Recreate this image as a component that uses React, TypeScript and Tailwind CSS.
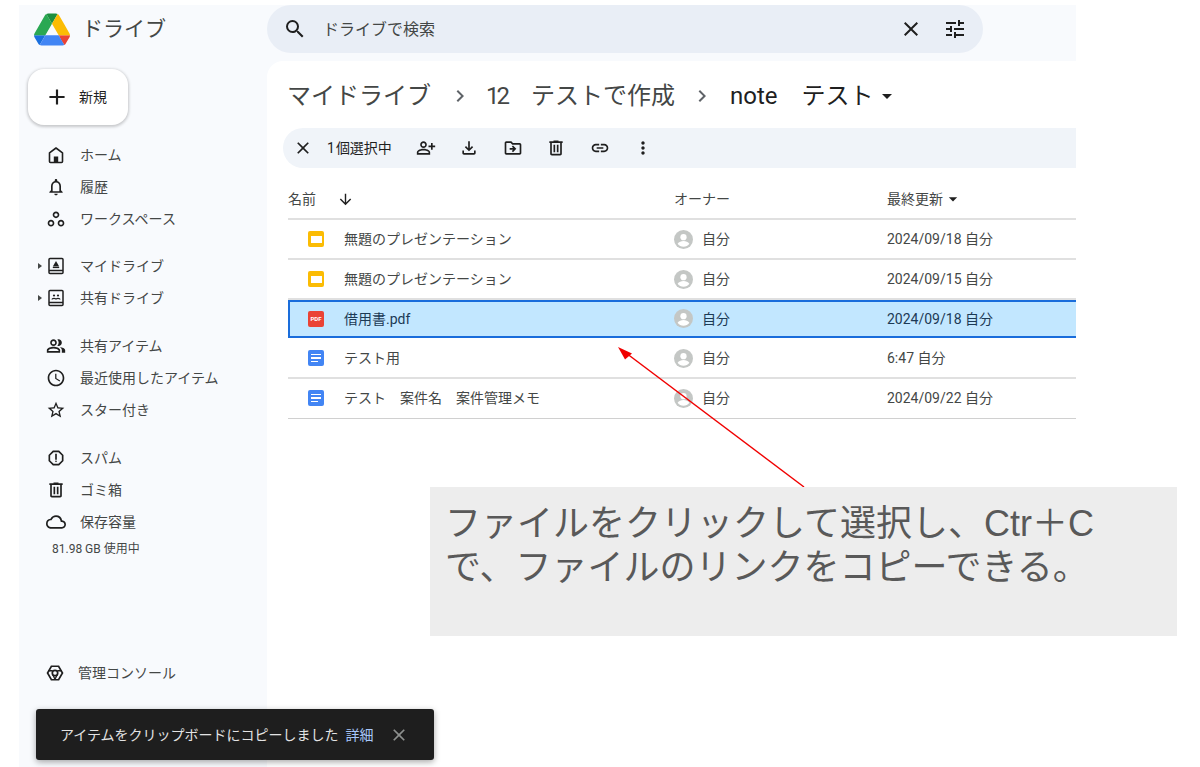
import type { ReactNode } from 'react'
import {
  MdAdd,
  MdArrowDownward,
  MdArrowDropDown,
  MdChevronRight,
  MdClose,
  MdMoreVert,
  MdOutlineAccessTime,
  MdOutlineCloud,
  MdOutlineDriveFileMove,
  MdOutlineFileDownload,
  MdOutlineLink,
  MdOutlineNotifications,
  MdOutlinePeopleAlt,
  MdOutlinePersonAddAlt,
  MdOutlineReport,
  MdOutlineStarBorder,
  MdOutlineTune,
  MdOutlineWorkspaces,
  MdSearch,
} from 'react-icons/md'

function DriveLogo() {
  return (
    <svg viewBox="0 0 87.3 78" className="h-[33px] w-[36px]">
      <path d="m6.6 66.85 3.85 6.65c.8 1.4 1.95 2.5 3.3 3.3l13.75-23.8h-27.5c0 1.55.4 3.1 1.2 4.5z" fill="#1a6fde" />
      <path d="m43.65 25-13.75-23.8c-1.35.8-2.5 1.9-3.3 3.3l-25.4 44a9.06 9.06 0 0 0 -1.2 4.5h27.5z" fill="#2aa853" />
      <path d="m73.55 76.8c1.35-.8 2.5-1.9 3.3-3.3l1.6-2.75 7.65-13.25c.8-1.4 1.2-2.95 1.2-4.5h-27.502l5.852 11.5z" fill="#ea4335" />
      <path d="m43.65 25 13.75-23.8c-1.35-.8-2.9-1.2-4.5-1.2h-18.5c-1.6 0-3.15.45-4.5 1.2z" fill="#1c8f3f" />
      <path d="m59.8 53h-32.3l-13.75 23.8c1.35.8 2.9 1.2 4.5 1.2h50.8c1.6 0 3.15-.45 4.5-1.2z" fill="#4285f4" />
      <path d="m73.4 26.5-12.7-22c-.8-1.4-1.95-2.5-3.3-3.3l-13.75 23.8 16.15 28h27.45c0-1.55-.4-3.1-1.2-4.5z" fill="#fbbc04" />
    </svg>
  )
}

function HomeIcon() {
  return (
    <svg viewBox="0 0 20 20" className="h-5 w-5" fill="none" stroke="#1f1f1f" strokeWidth="1.6" strokeLinejoin="round">
      <path d="M10 3l6.5 4.8v8.7a1 1 0 0 1-1 1h-11a1 1 0 0 1-1-1V7.800z" />
      <rect x="7.800" y="11.500" width="4.400" height="6" fill="#1f1f1f" stroke="none" />
    </svg>
  )
}

function TrashIcon({ size = 20 }: { size?: number }) {
  return (
    <svg viewBox="0 0 24 24" width={size} height={size} fill="#1f1f1f">
      <path d="M7 21q-.825 0-1.412-.587Q5 19.825 5 19V6H4V4h5V3h6v1h5v2h-1v13q0 .825-.587 1.413Q17.825 21 17 21ZM17 6H7v13h10ZM9 17h2V8H9Zm4 0h2V8h-2Z" />
    </svg>
  )
}

function MyDriveIcon() {
  return (
    <svg viewBox="0 0 20 20" className="h-5 w-5" fill="none" stroke="#1f1f1f" strokeWidth="1.5">
      <rect x="3" y="2.500" width="14" height="15" rx="1" />
      <path d="M3 14.500h14" />
      <path d="M10 5l3.200 5.500H6.800z" fill="#1f1f1f" stroke="none" />
      <path d="M6.800 11.500h6.400" strokeWidth="1.200" />
    </svg>
  )
}

function SharedDriveIcon() {
  return (
    <svg viewBox="0 0 20 20" className="h-5 w-5" fill="none" stroke="#1f1f1f" strokeWidth="1.5">
      <rect x="3" y="2.500" width="14" height="15" rx="1" />
      <path d="M3 14.500h14" />
      <circle cx="8" cy="7.500" r="1.100" fill="#1f1f1f" stroke="none" />
      <circle cx="12" cy="7.500" r="1.100" fill="#1f1f1f" stroke="none" />
      <path d="M6 11.500c0-1.600 4-1.600 4 0M10 11.500c0-1.600 4-1.600 4 0" strokeWidth="1.200" />
    </svg>
  )
}

function AdminIcon() {
  return (
    <svg viewBox="0 0 20 20" className="h-[18px] w-[18px]" fill="none" stroke="#1f1f1f" strokeWidth="1.900">
      <path d="M6 2.500h8l4.300 7.500-4.300 7.500H6L1.700 10z" />
      <circle cx="10" cy="10" r="3" />
      <path d="M2.500 7.500h5M17.500 7.500h-5M10 17l-2.400-5M10 17l2.400-5" strokeWidth="1.500" />
    </svg>
  )
}

function Avatar() {
  return (
    <svg viewBox="0 0 20 20" className="h-[19px] w-[19px] shrink-0">
      <circle cx="10" cy="10" r="10" fill="#c4c7c5" />
      <circle cx="10" cy="7.600" r="3.300" fill="#fff" />
      <path d="M3.800 14.600c1.400-2.100 3.700-2.900 6.200-2.900s4.800.8 6.200 2.900c-1.400 1.900-3.700 3.100-6.200 3.100s-4.800-1.200-6.200-3.100z" fill="#fff" />
    </svg>
  )
}

function SlidesIcon() {
  return (
    <div className="flex h-4 w-4 items-center justify-center rounded-[2px] bg-[#fbbc04]">
      <div className="h-[7px] w-[11px] bg-white" />
    </div>
  )
}

function PdfIcon() {
  return (
    <div className="flex h-4 w-4 items-center justify-center rounded-[2px] bg-[#ea4335] text-[6px] leading-none font-bold text-white">
      PDF
    </div>
  )
}

function DocIcon() {
  return (
    <div className="flex h-4 w-4 flex-col justify-center gap-[2px] rounded-[2px] bg-[#4285f4] pl-[3px]">
      <div className="h-[1.5px] w-[10px] bg-white" />
      <div className="h-[1.5px] w-[10px] bg-white" />
      <div className="h-[1.5px] w-[7px] bg-white" />
    </div>
  )
}

type NavItem = { label: string; icon: ReactNode; caret?: boolean }

const navGroups: NavItem[][] = [
  [
    { label: 'ホーム', icon: <HomeIcon /> },
    { label: '履歴', icon: <MdOutlineNotifications size={20} /> },
    { label: 'ワークスペース', icon: <MdOutlineWorkspaces size={20} /> },
  ],
  [
    { label: 'マイドライブ', icon: <MyDriveIcon />, caret: true },
    { label: '共有ドライブ', icon: <SharedDriveIcon />, caret: true },
  ],
  [
    { label: '共有アイテム', icon: <MdOutlinePeopleAlt size={20} /> },
    { label: '最近使用したアイテム', icon: <MdOutlineAccessTime size={20} /> },
    { label: 'スター付き', icon: <MdOutlineStarBorder size={20} /> },
  ],
  [
    { label: 'スパム', icon: <MdOutlineReport size={20} /> },
    { label: 'ゴミ箱', icon: <TrashIcon /> },
    { label: '保存容量', icon: <MdOutlineCloud size={20} /> },
  ],
]

type FileRow = { name: string; icon: ReactNode; date: string; selected?: boolean }

const files: FileRow[] = [
  { name: '無題のプレゼンテーション', icon: <SlidesIcon />, date: '2024/09/18 自分' },
  { name: '無題のプレゼンテーション', icon: <SlidesIcon />, date: '2024/09/15 自分' },
  { name: '借用書.pdf', icon: <PdfIcon />, date: '2024/09/18 自分', selected: true },
  { name: 'テスト用', icon: <DocIcon />, date: '6:47 自分' },
  { name: 'テスト　案件名　案件管理メモ', icon: <DocIcon />, date: '2024/09/22 自分' },
]

const toolbarIcons = [
  <MdOutlinePersonAddAlt size={20} />,
  <MdOutlineFileDownload size={20} />,
  <MdOutlineDriveFileMove size={20} />,
  <TrashIcon />,
  <MdOutlineLink size={20} />,
  <MdMoreVert size={20} />,
]

function Sidebar() {
  return (
    <aside className="flex w-[248px] shrink-0 flex-col pt-2 pl-[9px]">
      <button className="flex h-14 w-[100px] items-center rounded-2xl bg-white pb-px pl-[17px] text-sm text-[#1f1f1f] shadow-[0_1px_3px_1px_rgba(0,0,0,0.2)]">
        <MdAdd size={26} className="-ml-[1px]" />
        <span className="ml-[9px]">新規</span>
      </button>
      <nav className="mt-[14px] -ml-[9px] flex flex-col gap-4">
        {navGroups.map((group, i) => (
          <div key={i} className={i === 1 ? '-mt-px' : ''}>
            {group.map((item) => (
              <div key={item.label} className="flex h-8 items-center text-sm text-[#444746]">
                <div className="flex w-[27px] justify-end pr-1">
                  {item.caret && <div className="h-0 w-0 border-y-[3px] border-l-[4px] border-y-transparent border-l-[#444746]" />}
                </div>
                <div className="flex w-5 justify-center text-[#1f1f1f]">{item.icon}</div>
                <span className="ml-[14px]">{item.label}</span>
              </div>
            ))}
          </div>
        ))}
      </nav>
      <div className="mt-px -ml-[9px] h-5 pl-[33px] text-xs leading-5 text-[#444746]">81.98 GB 使用中</div>
      <div className="mt-auto -ml-[9px] mb-[78px] flex h-8 items-center pl-[27px] text-sm text-[#444746]">
        <div className="flex w-[18px] justify-center">
          <AdminIcon />
        </div>
        <span className="ml-[14px]">管理コンソール</span>
      </div>
    </aside>
  )
}

function FileList() {
  return (
    <div className="ml-[21px] text-sm text-[#444746]">
      <div className="flex h-10 items-center border-b-2 border-[#e0e0e0]">
        <div className="flex w-[386px] items-center">
          <span>名前</span>
          <MdArrowDownward size={17} className="ml-[21px] text-[#1f1f1f]" />
        </div>
        <div className="w-[213px]">オーナー</div>
        <div className="flex items-center">
          最終更新
          <MdArrowDropDown size={20} className="text-[#1f1f1f]" />
        </div>
      </div>
      {files.map((file, i) => (
        <div
          key={i}
          className={
            file.selected
              ? 'mb-px flex h-[38px] items-center border-y-2 border-l-2 border-[#1a6ddb] bg-[#c2e7ff] pb-px text-[#1c3a55]'
              : i === files.length - 1
                ? 'flex h-10 items-center border-b border-[#d0d0d0] pb-px'
                : 'flex h-10 items-center border-b-2 border-[#e0e0e0]'
          }
        >
          <div className={file.selected ? 'flex w-[384px] items-center pl-[18px]' : 'flex w-[386px] items-center pl-5'}>
            {file.icon}
            <span className="ml-[20px]">{file.name}</span>
          </div>
          <div className="flex w-[213px] items-center">
            <Avatar />
            <span className="ml-[9px]">自分</span>
          </div>
          <div>{file.date}</div>
        </div>
      ))}
    </div>
  )
}

function Main() {
  return (
    <main className="min-w-0 flex-1 rounded-tl-2xl bg-white">
      <div className="ml-5 flex h-[67px] items-center pt-[3px] text-2xl text-[#1f1f1f]">
        <span className="text-[#444746]">マイドライブ</span>
        <MdChevronRight size={24} className="ml-[17px] mr-[14px] text-[#5f6368]" />
        <span className="tracking-[-3px] text-[#444746]">12</span>
        <span className="text-[#444746]">　テストで作成</span>
        <MdChevronRight size={24} className="ml-[15px] mr-4 text-[#5f6368]" />
        <span>note　テスト</span>
        <MdArrowDropDown size={24} className="ml-px text-[#1f1f1f]" />
      </div>
      <div className="ml-4 flex h-10 items-center rounded-l-full bg-[#f0f4f9] pl-[10px] text-sm text-[#1f1f1f]">
        <MdClose size={20} />
        <span className="ml-[14px] w-[77px]">
          1<span className="ml-px">個選択中</span>
        </span>
        {toolbarIcons.map((icon, i) => (
          <div key={i} className="flex w-[43.5px] justify-center">
            {icon}
          </div>
        ))}
      </div>
      <div className="mt-3">
        <FileList />
      </div>
    </main>
  )
}

export default function App() {
  return (
    <div className="relative h-[767px] w-[1200px] overflow-hidden bg-white font-['Roboto','Noto_Sans_CJK_JP',sans-serif]">
      <div className="mt-[5px] ml-[19px] flex h-[762px] w-[1057px] flex-col bg-[#f8fafd]">
        <header className="flex h-14 shrink-0">
          <div className="flex w-[248px] shrink-0 items-start pt-[8px] pl-[15px]">
            <DriveLogo />
            <span className="ml-3 text-[21px] leading-8 text-[#444746]">ドライブ</span>
          </div>
          <div className="flex h-12 w-[716px] items-center rounded-full bg-[#e9eef6] pr-4 pl-4 text-[#1f1f1f]">
            <MdSearch size={24} />
            <span className="ml-4 flex-1 pt-[2px] text-base text-[#444746]">ドライブで検索</span>
            <MdClose size={24} />
            <MdOutlineTune size={24} className="ml-5" />
          </div>
        </header>
        <div className="flex min-h-0 flex-1">
          <Sidebar />
          <Main />
        </div>
      </div>

      {/* annotation arrow */}
      <svg viewBox="0 0 1200 767" className="pointer-events-none absolute inset-0 h-[767px] w-[1200px]">
        <path d="M804 487L626 353" stroke="#f00000" strokeWidth="1.500" fill="none" />
        <path d="M618 347L632 353.500L625 359.500z" fill="#f00000" />
      </svg>

      {/* callout */}
      <div className="absolute top-[487px] left-[430px] h-[149px] w-[747px] bg-[#ededed] pt-[15px] pl-[15px] font-['Liberation_Sans','Noto_Sans_CJK_JP',sans-serif] text-[36px] leading-[44px] text-[#595959]">
        ファイルをクリックして選択し、Ctr＋C
        <br />
        で、ファイルのリンクをコピーできる。
      </div>

      {/* toast */}
      <div className="absolute top-[709px] left-[36px] flex h-[51px] w-[398px] items-center rounded-[3px] bg-[#1e1e1e] pl-6 text-sm text-[#e3e3e3] shadow-[0_2px_6px_rgba(0,0,0,0.35)]">
        <span>アイテムをクリップボードにコピーしました</span>
        <span className="ml-[7px] text-[#a8c7fa]">詳細</span>
        <MdClose size={20} className="ml-[15px] text-[#8e918f]" />
      </div>
    </div>
  )
}
